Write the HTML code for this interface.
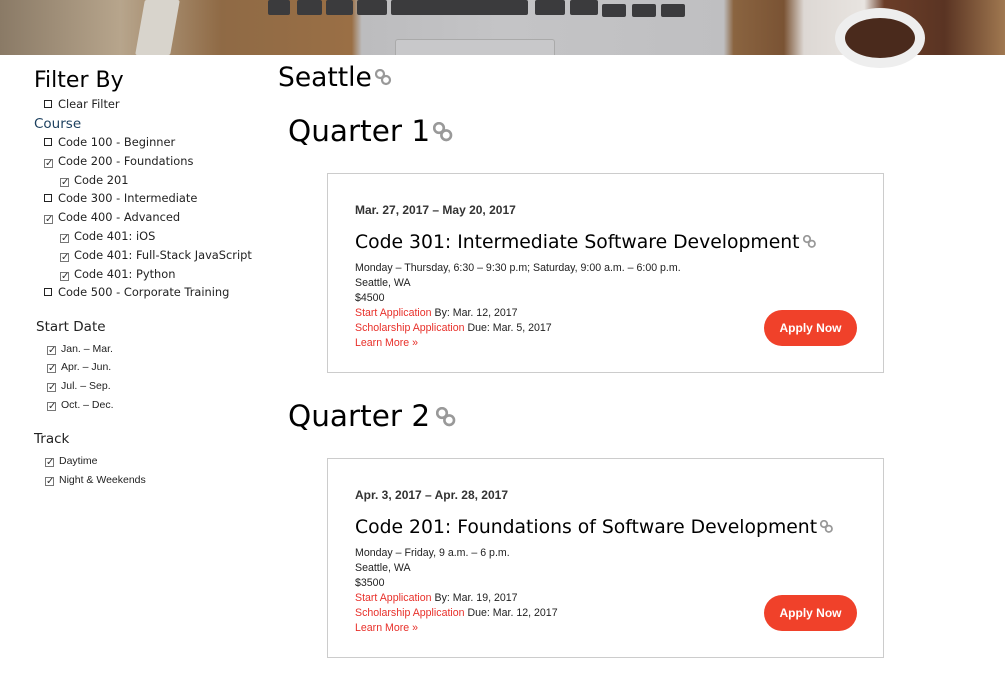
<!DOCTYPE html>
<html><head><meta charset="utf-8"><style>
*{margin:0;padding:0;box-sizing:border-box}
body{width:1005px;height:673px;background:#fff;font-family:"Liberation Sans",sans-serif;color:#222;position:relative;overflow:hidden}
.a{position:absolute;white-space:nowrap}
.hdr{position:absolute;left:0;top:0;width:1005px;height:55px;background:linear-gradient(90deg,#8a7a66 0%,#b7a58c 12%,#8f6a45 22%,#9a6f45 35%,#bcbcbe 36%,#c4c4c6 50%,#bfbfc1 72%,#8a6440 73%,#7a5334 78%,#ddd8d4 80%,#e8e4e0 86%,#6b3d28 88%,#5a3423 94%,#a07850 100%)}
.key{position:absolute;background:#3b3b3d;border-radius:2px;top:0;height:15px}
.t{font-family:"DejaVu Sans","Liberation Sans",sans-serif;color:#000;font-weight:normal}
.fs{font-size:11.4px;color:#222;font-family:"DejaVu Sans",sans-serif}
.cb{display:inline-block;width:8px;height:8px;border:1px solid #222;margin-right:6px;vertical-align:0}
.ck{display:inline-block;width:9px;height:9px;border:1px solid #777;margin-right:5px;font-size:10px;line-height:7px;color:#333;text-align:center;vertical-align:-1px;font-family:"DejaVu Sans",sans-serif}
.sm{font-size:10.5px;color:#222}
.card{position:absolute;left:327px;width:557px;height:200px;border:1px solid #ccc}
.card .d{position:absolute;left:27px;top:29px;font-size:12px;font-weight:bold;color:#333}
.card .ti{position:absolute;left:27px;top:58px;font-size:18.8px;font-family:"DejaVu Sans",sans-serif;color:#000;white-space:nowrap}
.card .inf{position:absolute;left:27px;top:87px;font-size:10.6px;line-height:15px;color:#222;white-space:nowrap}
.r{color:#e8302a}
.btn{position:absolute;left:436px;top:136px;width:93px;height:36px;border-radius:18px;background:#f0412a;color:#fff;font-weight:bold;font-size:12px;text-align:center;line-height:36px}
</style></head><body>
<div class="hdr">
<div class="key" style="left:140px;width:35px;top:0;height:55px;background:#d8d4cc;transform:skewX(-10deg)"></div>
<div class="key" style="left:268px;width:22px"></div><div class="key" style="left:297px;width:25px"></div><div class="key" style="left:326px;width:27px"></div><div class="key" style="left:357px;width:30px"></div><div class="key" style="left:391px;width:137px"></div><div class="key" style="left:535px;width:30px"></div><div class="key" style="left:570px;width:28px"></div><div class="key" style="left:602px;width:24px;top:4px;height:13px"></div><div class="key" style="left:632px;width:24px;top:4px;height:13px"></div><div class="key" style="left:661px;width:24px;top:4px;height:13px"></div>
<div style="position:absolute;left:395px;top:39px;width:160px;height:16px;border:1px solid #aaa;border-bottom:none;border-radius:3px 3px 0 0;background:#c8c8ca"></div>
<div style="position:absolute;left:835px;top:8px;width:90px;height:60px;border-radius:50%;background:#4a2a1c;border:10px solid #eee"></div>
</div>

<div class="a t" style="left:34px;top:68px;font-size:22px">Filter By</div>
<div class="a fs" style="left:44px;top:97px"><span class="cb"></span>Clear Filter</div>
<div class="a" style="left:34px;top:116px;font-size:13.5px;color:#1b3f5e;font-family:'DejaVu Sans',sans-serif">Course</div>
<div class="a fs" style="left:44px;top:135px"><span class="cb"></span>Code 100 - Beginner</div>
<div class="a fs" style="left:44px;top:154px"><span class="ck">✓</span>Code 200 - Foundations</div>
<div class="a fs" style="left:60px;top:173px"><span class="ck">✓</span>Code 201</div>
<div class="a fs" style="left:44px;top:191px"><span class="cb"></span>Code 300 - Intermediate</div>
<div class="a fs" style="left:44px;top:210px"><span class="ck">✓</span>Code 400 - Advanced</div>
<div class="a fs" style="left:60px;top:229px"><span class="ck">✓</span>Code 401: iOS</div>
<div class="a fs" style="left:60px;top:248px"><span class="ck">✓</span>Code 401: Full-Stack JavaScript</div>
<div class="a fs" style="left:60px;top:267px"><span class="ck">✓</span>Code 401: Python</div>
<div class="a fs" style="left:44px;top:285px"><span class="cb"></span>Code 500 - Corporate Training</div>

<div class="a" style="left:36px;top:319px;font-size:13.5px;color:#222;font-family:'DejaVu Sans',sans-serif">Start Date</div>
<div class="a sm" style="left:47px;top:343px"><span class="ck">✓</span>Jan. – Mar.</div>
<div class="a sm" style="left:47px;top:361px"><span class="ck">✓</span>Apr. – Jun.</div>
<div class="a sm" style="left:47px;top:380px"><span class="ck">✓</span>Jul. – Sep.</div>
<div class="a sm" style="left:47px;top:399px"><span class="ck">✓</span>Oct. – Dec.</div>
<div class="a" style="left:34px;top:431px;font-size:13.5px;color:#222;font-family:'DejaVu Sans',sans-serif">Track</div>
<div class="a sm" style="left:45px;top:455px"><span class="ck">✓</span>Daytime</div>
<div class="a sm" style="left:45px;top:474px"><span class="ck">✓</span>Night &amp; Weekends</div>

<svg width="0" height="0" style="position:absolute"><defs><g id="lk" fill="none" stroke="#999" stroke-width="2.2"><rect x="1" y="1" width="8" height="8" rx="4" transform="rotate(45 5 5)"/><rect x="7" y="7" width="8" height="8" rx="4" transform="rotate(45 11 11)"/></g></defs></svg>

<div class="a t" style="left:278px;top:62px;font-size:26.5px">Seattle<svg width="20" height="18" style="margin-left:3px;vertical-align:-1px"><use href="#lk"/></svg></div>
<div class="a t" style="left:288px;top:114px;font-size:29.5px">Quarter 1<svg width="22" height="20" style="margin-left:3px;vertical-align:-1px"><use href="#lk" transform="scale(1.2)"/></svg></div>

<div class="card" style="top:173px">
<div class="d">Mar. 27, 2017 – May 20, 2017</div>
<div class="ti">Code 301: Intermediate Software Development<svg width="14" height="14" style="margin-left:3px;vertical-align:-1px"><use href="#lk" transform="scale(.8)"/></svg></div>
<div class="inf">Monday – Thursday, 6:30 – 9:30 p.m; Saturday, 9:00 a.m. – 6:00 p.m.<br>Seattle, WA<br>$4500<br><span class="r">Start Application</span> By: Mar. 12, 2017<br><span class="r">Scholarship Application</span> Due: Mar. 5, 2017<br><span class="r">Learn More »</span></div>
<div class="btn">Apply Now</div>
</div>

<div class="a t" style="left:288px;top:399px;font-size:29.5px">Quarter 2<svg width="22" height="20" style="margin-left:6px;vertical-align:-1px"><use href="#lk" transform="scale(1.2)"/></svg></div>

<div class="card" style="top:458px">
<div class="d">Apr. 3, 2017 – Apr. 28, 2017</div>
<div class="ti">Code 201: Foundations of Software Development<svg width="14" height="14" style="margin-left:3px;vertical-align:-1px"><use href="#lk" transform="scale(.8)"/></svg></div>
<div class="inf">Monday – Friday, 9 a.m. – 6 p.m.<br>Seattle, WA<br>$3500<br><span class="r">Start Application</span> By: Mar. 19, 2017<br><span class="r">Scholarship Application</span> Due: Mar. 12, 2017<br><span class="r">Learn More »</span></div>
<div class="btn">Apply Now</div>
</div>
</body></html>
